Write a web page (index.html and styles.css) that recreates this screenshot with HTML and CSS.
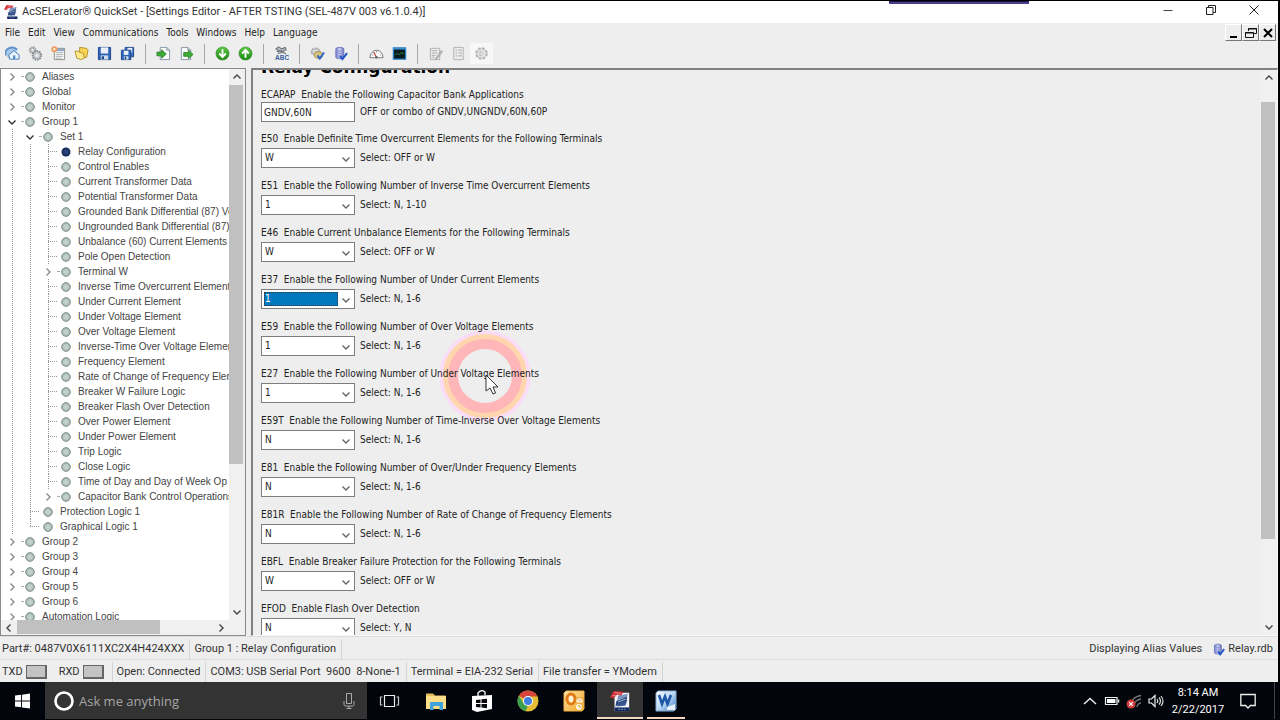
FILE: index.html
```html
<!DOCTYPE html>
<html lang="en">
<head>
<meta charset="utf-8">
<title>AcSELerator QuickSet</title>
<link rel="stylesheet" href="styles.css">
</head>
<body>
<svg class="defs" aria-hidden="true">
  <defs>
    <radialGradient id="g-dot"><stop offset="0" stop-color="#c9d8d3"/><stop offset="0.6" stop-color="#b8c8c3"/><stop offset="1" stop-color="#8d9f9a"/></radialGradient>
    <radialGradient id="g-navy"><stop offset="0" stop-color="#31508f"/><stop offset="1" stop-color="#12244f"/></radialGradient>
    <linearGradient id="g-green" x1="0" y1="0" x2="0" y2="1"><stop offset="0" stop-color="#5cc646"/><stop offset="1" stop-color="#1f8a17"/></linearGradient>
    <linearGradient id="g-db" x1="0" y1="0" x2="1" y2="0"><stop offset="0" stop-color="#6f7bd0"/><stop offset="0.5" stop-color="#c9cff2"/><stop offset="1" stop-color="#6a70b8"/></linearGradient>
    <linearGradient id="g-word" x1="0" y1="0" x2="1" y2="1"><stop offset="0" stop-color="#fff"/><stop offset="0.5" stop-color="#b9d8f5"/><stop offset="1" stop-color="#3a78c2"/></linearGradient>
    <linearGradient id="g-out" x1="0" y1="0" x2="1" y2="1"><stop offset="0" stop-color="#ffe9b0"/><stop offset="1" stop-color="#f2a21c"/></linearGradient>
    <symbol id="dot" viewBox="0 0 10 10"><circle cx="5" cy="5" r="4.400" fill="url(#g-dot)" stroke="#87958f" stroke-width="0.900"/></symbol>
    <symbol id="dot-on" viewBox="0 0 10 10"><circle cx="5" cy="5" r="4.500" fill="url(#g-navy)"/></symbol>
    <symbol id="chev-r" viewBox="0 0 8 8"><path d="M2.500 0.500 6 4 2.500 7.500" fill="none" stroke="currentColor" stroke-width="1.400"/></symbol>
    <symbol id="chev-l" viewBox="0 0 8 8"><path d="M5.500 0.500 2 4 5.500 7.500" fill="none" stroke="currentColor" stroke-width="1.400"/></symbol>
    <symbol id="chev-d" viewBox="0 0 8 8"><path d="M0.500 2.500 4 6 7.500 2.500" fill="none" stroke="currentColor" stroke-width="1.400"/></symbol>
    <symbol id="chev-u" viewBox="0 0 8 8"><path d="M0.500 5.500 4 2 7.500 5.500" fill="none" stroke="currentColor" stroke-width="1.400"/></symbol>
    <symbol id="quickset" viewBox="0 0 22 24">
      <path d="M5 3H21V23H5Z" fill="#f4f6fb"/>
      <path d="M5 19H21V23H5Z" fill="#12285f"/>
      <path d="M9 21h2m1 0h2m1 0h2" stroke="#8fa3d6" stroke-width="1"/>
      <path d="M9 6 20 4 18 8 8 11Z" fill="#7e93bd"/>
      <path d="M7 12 19 7 18 12 6 18Z" fill="#27477f"/>
      <path d="M9 15 19 11 17 17 8 18Z" fill="#3a5890"/>
      <path d="M9 13 17 10" stroke="#dfe6f3" stroke-width="0.800"/>
      <path d="M4 1 15 2 12 6 8 5 4 9 0 8Z" fill="#cf2d33"/>
      <path d="M5 3 12 3.500M3 6 8 6.500" stroke="#f2b2b2" stroke-width="0.800"/>
    </symbol>
    <symbol id="t-home" viewBox="0 0 16 16"><circle cx="7" cy="8" r="6" fill="#a9caea"/><path d="M1 10A7 6 0 0 1 13 4" fill="none" stroke="#5f93c9" stroke-width="2.200"/><path d="M4 9.500 9.500 5 15 9.500V14H5Z" fill="#eef5fc" stroke="#3f77b5" stroke-width="1"/><path d="M8.500 10h2.500v4H8.500Z" fill="#4f8ccc"/></symbol>
    <symbol id="t-gears" viewBox="0 0 16 16"><circle cx="5" cy="4.500" r="3.200" fill="#c3c6ca" stroke="#999ea3" stroke-width="2" stroke-dasharray="1.400 0.800"/><circle cx="9.500" cy="10" r="4.600" fill="#c7cacd" stroke="#83898f" stroke-width="2" stroke-dasharray="1.700 0.900"/><circle cx="9.500" cy="10" r="1.600" fill="#eee"/><circle cx="5" cy="4.500" r="1" fill="#eee"/></symbol>
    <symbol id="t-new" viewBox="0 0 16 16"><path d="M3.500 2.500H14.500V14.500H3.500Z" fill="#fbfbf5" stroke="#8d8d80"/><path d="M5 7h8M5 9h8M5 11h8M5 13h6" stroke="#a9b0bb"/><path d="M4 3h10v2.500H4Z" fill="#8ea8cc"/><circle cx="3.500" cy="3.500" r="3.200" fill="#f09a62"/><circle cx="3.500" cy="3.500" r="1.300" fill="#fff1c4"/></symbol>
    <symbol id="t-open" viewBox="0 0 16 16"><path d="M6 1.500 13.500 2.500 15 4 13.500 12 6 13Z" fill="#f7d455" stroke="#ab8420" stroke-width="0.900"/><path d="M1 5.500 5 5.500 6 7 10 7.500 11 13 8 14.500 3 13Z" fill="#fdeb8b" stroke="#ab8420" stroke-width="0.900"/></symbol>
    <symbol id="t-save" viewBox="0 0 16 16"><path d="M1.500 1.500H14.500V14.500H1.500Z" fill="#2e62b5" stroke="#1f4689"/><path d="M4 1.500h8v6.500H4Z" fill="#e8eff9"/><path d="M4 10h8v4.500H4Z" fill="#cfdcf0"/><path d="M5 11h2.500v3H5Z" fill="#1c3f7d"/></symbol>
    <symbol id="t-saveall" viewBox="0 0 16 16"><path d="M5.500 1.500H14.500V11.500H5.500Z" fill="#3b70c2" stroke="#1f4689"/><path d="M8 2h5v5H8Z" fill="#e8eff9"/><path d="M1.500 4.500H11.500V14.500H1.500Z" fill="#2e62b5" stroke="#1f4689"/><path d="M4 5h5v4.500H4Z" fill="#e8eff9"/><path d="M4 11h5v3.500H4Z" fill="#cfdcf0"/><path d="M5 11.500h1.500v3H5Z" fill="#1c3f7d"/></symbol>
    <symbol id="t-import" viewBox="0 0 16 16"><path d="M4.500 1.500H11.500L14.500 4.500V14.500H4.500Z" fill="#f8fafc" stroke="#8593a6"/><path d="M11.500 1.500V4.500H14.500" fill="none" stroke="#8593a6"/><path d="M1 6.500H6V4L11 8.500 6 13V10.500H1Z" fill="#3fae36" stroke="#23771d" stroke-width="0.800"/></symbol>
    <symbol id="t-export" viewBox="0 0 16 16"><path d="M2.500 1.500H9.500L12.500 4.500V14.500H2.500Z" fill="#f8fafc" stroke="#8593a6"/><path d="M9.500 1.500V4.500H12.500" fill="none" stroke="#8593a6"/><path d="M5 7H10V4.500L15 9 10 13.500V11H5Z" fill="#3fae36" stroke="#23771d" stroke-width="0.800"/></symbol>
    <symbol id="t-down" viewBox="0 0 16 16"><circle cx="8" cy="8" r="7" fill="url(#g-green)" stroke="#2a8522" stroke-width="0.600"/><path d="M8 3.500V11.500M4.500 8 8 11.800 11.500 8" fill="none" stroke="#fff" stroke-width="2"/></symbol>
    <symbol id="t-up" viewBox="0 0 16 16"><circle cx="8" cy="8" r="7" fill="url(#g-green)" stroke="#2a8522" stroke-width="0.600"/><path d="M8 12.500V4.500M4.500 8 8 4.200 11.500 8" fill="none" stroke="#fff" stroke-width="2"/></symbol>
    <symbol id="t-abc" viewBox="0 0 16 16"><path d="M2 3 5 1 8 3 12 1.500 13 4 9 6 4 4.500ZM3 6 8 5 13 9M4 8 9 7" fill="#b9bdc2" stroke="#6b7178" stroke-width="1.100"/><text x="1" y="15" class="abc">ABC</text></symbol>
    <symbol id="t-gearcheck" viewBox="0 0 16 16"><ellipse cx="6" cy="6" rx="4.500" ry="3.500" fill="#d4d6d8" stroke="#a2a5a8" stroke-width="1.800" stroke-dasharray="1.600 0.800"/><ellipse cx="9" cy="9.500" rx="4.500" ry="3.500" fill="#dcc67e" stroke="#aa9a62" stroke-width="1.200"/><path d="M8 10 10.500 13.500 15 7" fill="none" stroke="#2b62c9" stroke-width="2"/></symbol>
    <symbol id="t-db" viewBox="0 0 16 16"><path d="M3 3C3 1 11.500 1 11.500 3V12C11.500 14 3 14 3 12Z" fill="url(#g-db)" stroke="#5a62ae" stroke-width="0.800"/><path d="M3 5.500h8.500M3 8h8.500M3 10.500h8.500" stroke="#8890cc" stroke-width="0.800"/><path d="M7.500 10.500 10 14 15 7.500" fill="none" stroke="#1f55c4" stroke-width="2.200"/></symbol>
    <symbol id="t-gauge" viewBox="0 0 16 16"><path d="M1 12.500A7 8 0 0 1 15 12.500Z" fill="#fbfbfb" stroke="#70757b"/><path d="M8 12 5 6.500" stroke="#c3342c" stroke-width="1.200"/><path d="M3.500 9.500h1M8 5.500v1.200M12.500 9.500h-1" stroke="#777"/><circle cx="8" cy="12" r="1.300" fill="#666"/></symbol>
    <symbol id="t-term" viewBox="0 0 16 16"><path d="M1.500 2H14.500V14H1.500Z" fill="#061c1e" stroke="#2a7fc8" stroke-width="1.400"/><path d="M1 3h14" stroke="#3f97df" stroke-width="1.500"/><path d="M3 9 6 8 7.500 9.500 9.500 7 11 8 13 7.500" fill="none" stroke="#2f7d3c"/></symbol>
    <symbol id="t-edit" viewBox="0 0 16 16"><path d="M2.500 2.500H12.500V14.500H2.500Z" fill="#ececec" stroke="#b0b0b0"/><path d="M4 5h6M4 7.500h6M4 10h4M4 12h3" stroke="#aaa"/><path d="M14 5 9 12 8 14 10.500 12.500 15.500 6Z" fill="#c5c5c5" stroke="#9b9b9b" stroke-width="0.800"/></symbol>
    <symbol id="t-list" viewBox="0 0 16 16"><path d="M3 1.500H13V14.500H3Z" fill="#ececec" stroke="#b0b0b0"/><path d="M5 4.500h1.500M5 7.500h1.500M5 10.500h1.500M8 4.500h3.500M8 7.500h3.500M8 10.500h3.500" stroke="#a2a2a2"/></symbol>
    <symbol id="t-cog" viewBox="0 0 16 16"><circle cx="8" cy="8" r="5.500" fill="#e4e4e4" stroke="#b3b3b3" stroke-width="2.400" stroke-dasharray="2.700 1.620"/><circle cx="8" cy="8" r="4.800" fill="#e4e4e4" stroke="#b9b9b9" stroke-width="0.800"/><path d="M6.500 5.500 10 8 6.500 10.500Z" fill="#f8f8f8" stroke="#a9a9a9" stroke-width="0.800"/></symbol>
  </defs>
</svg>

<div class="desktop">
<div class="window">
  <header class="titlebar">
    <svg class="app-icon"><use href="#quickset"/></svg>
    <h1 class="title">AcSELerator® QuickSet - [Settings Editor - AFTER TSTING (SEL-487V 003 v6.1.0.4)]</h1>
    <div class="caption">
      <button class="cap-btn" aria-label="Minimize"><svg viewBox="0 0 10 10"><path d="M0.500 5.500h9" stroke="#444" fill="none"/></svg></button>
      <button class="cap-btn" aria-label="Restore"><svg viewBox="0 0 10 10"><path d="M0.500 2.500h6.500v7H0.500ZM2.500 2.500V0.500h7v7H7" stroke="#222" fill="none"/></svg></button>
      <button class="cap-btn" aria-label="Close"><svg viewBox="0 0 10 10"><path d="M0.500 0.500 9.500 9.500M9.500 0.500 0.500 9.500" stroke="#222" fill="none"/></svg></button>
    </div>
    <div class="recorder-tab"></div>
  </header>

  <div class="menubar">
    <nav class="menus">
      <button class="menu">File</button><button class="menu">Edit</button><button class="menu">View</button><button class="menu">Communications</button><button class="menu">Tools</button><button class="menu">Windows</button><button class="menu">Help</button><button class="menu">Language</button>
    </nav>
    <div class="mdi">
      <button class="mdi-btn" aria-label="Minimize document"><svg viewBox="0 0 12 12"><path d="M2 10h7" stroke="#000" stroke-width="2"/></svg></button>
      <button class="mdi-btn" aria-label="Restore document"><svg viewBox="0 0 12 12"><path d="M3.500 4V1.500h8v5H9M3 2h9" stroke="#111" fill="none"/><path d="M0.500 5.500h8v5h-8ZM0 6h9" stroke="#111" fill="none"/></svg></button>
      <button class="mdi-btn" aria-label="Close document"><svg viewBox="0 0 12 12"><path d="M2 2 10 10M10 2 2 10" stroke="#000" stroke-width="2"/></svg></button>
    </div>
  </div>

  <div class="toolbar" role="toolbar">
    <button class="tool" aria-label="Home"><svg><use href="#t-home"/></svg></button>
    <button class="tool" aria-label="Options"><svg><use href="#t-gears"/></svg></button>
    <button class="tool" aria-label="New"><svg><use href="#t-new"/></svg></button>
    <button class="tool" aria-label="Open"><svg><use href="#t-open"/></svg></button>
    <button class="tool" aria-label="Save"><svg><use href="#t-save"/></svg></button>
    <button class="tool" aria-label="Save all"><svg><use href="#t-saveall"/></svg></button>
    <span class="tool-sep"></span>
    <button class="tool" aria-label="Import"><svg><use href="#t-import"/></svg></button>
    <button class="tool" aria-label="Export"><svg><use href="#t-export"/></svg></button>
    <span class="tool-sep"></span>
    <button class="tool" aria-label="Read"><svg><use href="#t-down"/></svg></button>
    <button class="tool" aria-label="Send"><svg><use href="#t-up"/></svg></button>
    <span class="tool-sep"></span>
    <button class="tool" aria-label="Aliases"><svg><use href="#t-abc"/></svg></button>
    <span class="tool-sep"></span>
    <button class="tool" aria-label="Check settings"><svg><use href="#t-gearcheck"/></svg></button>
    <button class="tool" aria-label="Database"><svg><use href="#t-db"/></svg></button>
    <span class="tool-sep"></span>
    <button class="tool" aria-label="Meter"><svg><use href="#t-gauge"/></svg></button>
    <button class="tool" aria-label="Terminal"><svg><use href="#t-term"/></svg></button>
    <span class="tool-sep"></span>
    <button class="tool" aria-label="Edit" disabled><svg><use href="#t-edit"/></svg></button>
    <button class="tool" aria-label="List" disabled><svg><use href="#t-list"/></svg></button>
    <button class="tool tool-hot" aria-label="Run" disabled><svg><use href="#t-cog"/></svg></button>
  </div>

  <main class="work">
    <aside class="tree-pane">
      <div class="tree-body">
        <ul class="tree">
          <li><div class="node"><span class="twig"><svg><use href="#chev-r"/></svg></span><svg class="bullet"><use href="#dot"/></svg>Aliases</div></li>
          <li><div class="node"><span class="twig"><svg><use href="#chev-r"/></svg></span><svg class="bullet"><use href="#dot"/></svg>Global</div></li>
          <li><div class="node"><span class="twig"><svg><use href="#chev-r"/></svg></span><svg class="bullet"><use href="#dot"/></svg>Monitor</div></li>
          <li><div class="node"><span class="twig open"><svg><use href="#chev-d"/></svg></span><svg class="bullet"><use href="#dot"/></svg>Group 1</div>
            <ul class="branch">
              <li><div class="node"><span class="twig open"><svg><use href="#chev-d"/></svg></span><svg class="bullet"><use href="#dot"/></svg>Set 1</div>
                <ul class="branch">
                  <li><div class="node"><span class="twig leaf"></span><svg class="bullet"><use href="#dot-on"/></svg>Relay Configuration</div></li>
                  <li><div class="node"><span class="twig leaf"></span><svg class="bullet"><use href="#dot"/></svg>Control Enables</div></li>
                  <li><div class="node"><span class="twig leaf"></span><svg class="bullet"><use href="#dot"/></svg>Current Transformer Data</div></li>
                  <li><div class="node"><span class="twig leaf"></span><svg class="bullet"><use href="#dot"/></svg>Potential Transformer Data</div></li>
                  <li><div class="node"><span class="twig leaf"></span><svg class="bullet"><use href="#dot"/></svg>Grounded Bank Differential (87) Vo</div></li>
                  <li><div class="node"><span class="twig leaf"></span><svg class="bullet"><use href="#dot"/></svg>Ungrounded Bank Differential (87)</div></li>
                  <li><div class="node"><span class="twig leaf"></span><svg class="bullet"><use href="#dot"/></svg>Unbalance (60) Current Elements</div></li>
                  <li><div class="node"><span class="twig leaf"></span><svg class="bullet"><use href="#dot"/></svg>Pole Open Detection</div></li>
                  <li><div class="node"><span class="twig"><svg><use href="#chev-r"/></svg></span><svg class="bullet"><use href="#dot"/></svg>Terminal W</div></li>
                  <li><div class="node"><span class="twig leaf"></span><svg class="bullet"><use href="#dot"/></svg>Inverse Time Overcurrent Element</div></li>
                  <li><div class="node"><span class="twig leaf"></span><svg class="bullet"><use href="#dot"/></svg>Under Current Element</div></li>
                  <li><div class="node"><span class="twig leaf"></span><svg class="bullet"><use href="#dot"/></svg>Under Voltage Element</div></li>
                  <li><div class="node"><span class="twig leaf"></span><svg class="bullet"><use href="#dot"/></svg>Over Voltage Element</div></li>
                  <li><div class="node"><span class="twig leaf"></span><svg class="bullet"><use href="#dot"/></svg>Inverse-Time Over Voltage Element</div></li>
                  <li><div class="node"><span class="twig leaf"></span><svg class="bullet"><use href="#dot"/></svg>Frequency Element</div></li>
                  <li><div class="node"><span class="twig leaf"></span><svg class="bullet"><use href="#dot"/></svg>Rate of Change of Frequency Element</div></li>
                  <li><div class="node"><span class="twig leaf"></span><svg class="bullet"><use href="#dot"/></svg>Breaker W Failure Logic</div></li>
                  <li><div class="node"><span class="twig leaf"></span><svg class="bullet"><use href="#dot"/></svg>Breaker Flash Over Detection</div></li>
                  <li><div class="node"><span class="twig leaf"></span><svg class="bullet"><use href="#dot"/></svg>Over Power Element</div></li>
                  <li><div class="node"><span class="twig leaf"></span><svg class="bullet"><use href="#dot"/></svg>Under Power Element</div></li>
                  <li><div class="node"><span class="twig leaf"></span><svg class="bullet"><use href="#dot"/></svg>Trip Logic</div></li>
                  <li><div class="node"><span class="twig leaf"></span><svg class="bullet"><use href="#dot"/></svg>Close Logic</div></li>
                  <li><div class="node"><span class="twig leaf"></span><svg class="bullet"><use href="#dot"/></svg>Time of Day and Day of Week Op</div></li>
                  <li><div class="node"><span class="twig"><svg><use href="#chev-r"/></svg></span><svg class="bullet"><use href="#dot"/></svg>Capacitor Bank Control Operations</div></li>
                </ul>
              </li>
              <li><div class="node"><span class="twig leaf"></span><svg class="bullet"><use href="#dot"/></svg>Protection Logic 1</div></li>
              <li><div class="node"><span class="twig leaf last"></span><svg class="bullet"><use href="#dot"/></svg>Graphical Logic 1</div></li>
            </ul>
          </li>
          <li><div class="node"><span class="twig"><svg><use href="#chev-r"/></svg></span><svg class="bullet"><use href="#dot"/></svg>Group 2</div></li>
          <li><div class="node"><span class="twig"><svg><use href="#chev-r"/></svg></span><svg class="bullet"><use href="#dot"/></svg>Group 3</div></li>
          <li><div class="node"><span class="twig"><svg><use href="#chev-r"/></svg></span><svg class="bullet"><use href="#dot"/></svg>Group 4</div></li>
          <li><div class="node"><span class="twig"><svg><use href="#chev-r"/></svg></span><svg class="bullet"><use href="#dot"/></svg>Group 5</div></li>
          <li><div class="node"><span class="twig"><svg><use href="#chev-r"/></svg></span><svg class="bullet"><use href="#dot"/></svg>Group 6</div></li>
          <li><div class="node"><span class="twig"><svg><use href="#chev-r"/></svg></span><svg class="bullet"><use href="#dot"/></svg>Automation Logic</div></li>
        </ul>
        <div class="vscroll"><svg><use href="#chev-u"/></svg><div class="track"><div class="thumb tree-thumb"></div></div><svg><use href="#chev-d"/></svg></div>
      </div>
      <div class="hscroll"><svg><use href="#chev-l"/></svg><div class="track"><div class="thumb"></div></div><svg><use href="#chev-r"/></svg></div>
    </aside>

    <section class="editor">
      <form class="form">
        <h2 class="heading">Relay Configuration</h2>
        <div class="field first"><label for="ecapap">ECAPAP&nbsp; Enable the Following Capacitor Bank Applications</label><div class="entry"><input class="text" id="ecapap" type="text" value="GNDV,60N"><span>OFF or combo of GNDV,UNGNDV,60N,60P</span></div></div>
        <div class="field"><label for="e50">E50&nbsp; Enable Definite Time Overcurrent Elements for the Following Terminals</label><div class="entry"><div class="combo"><select id="e50"><option>W</option><option>OFF</option></select><svg><use href="#chev-d"/></svg></div><span>Select: OFF or W</span></div></div>
        <div class="field"><label for="e51">E51&nbsp; Enable the Following Number of Inverse Time Overcurrent Elements</label><div class="entry"><div class="combo"><select id="e51"><option>1</option><option>N</option></select><svg><use href="#chev-d"/></svg></div><span>Select: N, 1-10</span></div></div>
        <div class="field"><label for="e46">E46&nbsp; Enable Current Unbalance Elements for the Following Terminals</label><div class="entry"><div class="combo"><select id="e46"><option>W</option><option>OFF</option></select><svg><use href="#chev-d"/></svg></div><span>Select: OFF or W</span></div></div>
        <div class="field"><label for="e37">E37&nbsp; Enable the Following Number of Under Current Elements</label><div class="entry"><div class="combo active"><select id="e37"><option>1</option><option>N</option></select><svg><use href="#chev-d"/></svg></div><span>Select: N, 1-6</span></div></div>
        <div class="field"><label for="e59">E59&nbsp; Enable the Following Number of Over Voltage Elements</label><div class="entry"><div class="combo"><select id="e59"><option>1</option><option>N</option></select><svg><use href="#chev-d"/></svg></div><span>Select: N, 1-6</span></div></div>
        <div class="field"><label for="e27">E27&nbsp; Enable the Following Number of Under Voltage Elements</label><div class="entry"><div class="combo"><select id="e27"><option>1</option><option>N</option></select><svg><use href="#chev-d"/></svg></div><span>Select: N, 1-6</span></div></div>
        <div class="field"><label for="e59t">E59T&nbsp; Enable the Following Number of Time-Inverse Over Voltage Elements</label><div class="entry"><div class="combo"><select id="e59t"><option>N</option><option>1</option></select><svg><use href="#chev-d"/></svg></div><span>Select: N, 1-6</span></div></div>
        <div class="field"><label for="e81">E81&nbsp; Enable the Following Number of Over/Under Frequency Elements</label><div class="entry"><div class="combo"><select id="e81"><option>N</option><option>1</option></select><svg><use href="#chev-d"/></svg></div><span>Select: N, 1-6</span></div></div>
        <div class="field"><label for="e81r">E81R&nbsp; Enable the Following Number of Rate of Change of Frequency Elements</label><div class="entry"><div class="combo"><select id="e81r"><option>N</option><option>1</option></select><svg><use href="#chev-d"/></svg></div><span>Select: N, 1-6</span></div></div>
        <div class="field"><label for="ebfl">EBFL&nbsp; Enable Breaker Failure Protection for the Following Terminals</label><div class="entry"><div class="combo"><select id="ebfl"><option>W</option><option>OFF</option></select><svg><use href="#chev-d"/></svg></div><span>Select: OFF or W</span></div></div>
        <div class="field"><label for="efod">EFOD&nbsp; Enable Flash Over Detection</label><div class="entry"><div class="combo"><select id="efod"><option>N</option><option>Y</option></select><svg><use href="#chev-d"/></svg></div><span>Select: Y, N</span></div></div>
      </form>
      <div class="vscroll"><svg><use href="#chev-u"/></svg><div class="track"><div class="thumb form-thumb"></div></div><svg><use href="#chev-d"/></svg></div>
    </section>
  </main>

  <footer class="status">
    <span class="cell">Part#: 0487V0X6111XC2X4H424XXX</span>
    <span class="cell">Group 1 : Relay Configuration</span>
    <span class="right">Displaying Alias Values</span>
    <span class="rdb"><svg><use href="#t-db"/></svg>Relay.rdb</span>
  </footer>
  <footer class="status comm">
    <span class="cell leds">TXD <i class="led"></i><span class="rxd">RXD</span> <i class="led"></i></span>
    <span class="cell">Open: Connected</span>
    <span class="cell">COM3: USB Serial Port&nbsp; 9600&nbsp; 8-None-1</span>
    <span class="cell">Terminal = EIA-232 Serial</span>
    <span class="cell">File transfer = YModem</span>
  </footer>
  <svg class="click" viewBox="0 0 96 96">
    <circle cx="48" cy="48" r="43" fill="none" stroke="#fbdcf6" stroke-width="5"/>
    <circle cx="48" cy="48" r="39" fill="none" stroke="#ffd6ae" stroke-width="6"/>
    <circle cx="48" cy="48" r="32" fill="none" stroke="#ffb6b8" stroke-width="10"/>
  </svg>
  <svg class="click pointer" viewBox="0 0 96 96">
    <path d="M49 47V63L53 60 56 66 58.500 65 56 59H61Z" fill="#fff" stroke="#333" stroke-width="1"/>
  </svg>
</div>
</div>

<div class="taskbar">
  <button class="start" aria-label="Start"><svg viewBox="0 0 16 16"><path d="M0 2.200 6.500 1.300V7.500H0ZM7.500 1.200 16 0V7.500H7.500ZM0 8.500H6.500V14.700L0 13.800ZM7.500 8.500H16V16L7.500 14.800Z" fill="#fff"/></svg></button>
  <div class="search">
    <svg class="cortana" viewBox="0 0 20 20"><circle cx="10" cy="10" r="8.500" fill="none" stroke="#fff" stroke-width="2.600"/></svg>
    <input class="ask" type="text" placeholder="Ask me anything" aria-label="Ask me anything">
    <svg class="mic" viewBox="0 0 12 16"><path d="M3.500 0.500h5v10h-5Z" fill="none" stroke="#aaa"/><path d="M1 8v3.500q0 1.500 1.500 1.500h7q1.500 0 1.500-1.500V8M6 13v2.500M3.500 15.500h5" fill="none" stroke="#aaa"/></svg>
  </div>
  <button class="task" aria-label="Task view"><svg viewBox="0 0 22 22"><path d="M5.500 5.500h10v11h-10Z" fill="none" stroke="#eee" stroke-width="1.200"/><path d="M3.500 7H1.500V15H3.500M17.500 7h2V15h-2" fill="none" stroke="#ccc" stroke-width="1.200"/></svg></button>
  <button class="task" aria-label="File Explorer"><svg viewBox="0 0 22 22"><path d="M1 3.500h7l2 2h10.500V19H1Z" fill="#e7bd5a"/><path d="M1 6h20V19H1Z" fill="#fbdd8a"/><path d="M5 20V12h13v8h-3.500v-4h-6v4Z" fill="#3fa3dd"/></svg></button>
  <button class="task" aria-label="Store"><svg viewBox="0 0 22 22"><path d="M1 6 21 5V19L6 22 1 20Z" fill="#fff"/><path d="M7 6V3Q10-1 14 2V5" fill="none" stroke="#fff" stroke-width="1.300"/><path d="M5 10 9.500 9.500V13H5ZM10.500 9.300 16 8.800V13h-5.500ZM5 14h4.500v3.500L5 17ZM10.500 14H16v4.300l-5.500-.7Z" fill="#05080d"/></svg></button>
  <button class="task" aria-label="Chrome"><svg viewBox="0 0 22 22"><circle cx="11" cy="11" r="10.500" fill="#e5bd35"/><path d="M11 11 1.900 5.750A10.500 10.500 0 0 1 20.600 6.500L11 6.500Z" fill="#d6453a"/><path d="M1.900 5.750 7 14 11 15.500 8.500 21.200A10.500 10.500 0 0 1 1.900 5.750Z" fill="#3b9f52"/><circle cx="11" cy="11" r="5" fill="#fff"/><circle cx="11" cy="11" r="4" fill="#3f7de0"/></svg></button>
  <button class="task" aria-label="Outlook"><svg viewBox="0 0 22 22"><path d="M3 1H21V19L19 21H1V3Z" fill="url(#g-out)" stroke="#f2b04a"/><ellipse cx="8" cy="9" rx="4" ry="5" fill="#fff3d0" stroke="#e07a13" stroke-width="3"/><path d="M13 8h7v5h-7Z" fill="#fdf6e3" stroke="#e09a2f" stroke-width="0.800"/><path d="M13 8 16.500 11 20 8" fill="none" stroke="#e09a2f" stroke-width="0.800"/><circle cx="16" cy="17" r="3" fill="#fff5d8"/><path d="M16 15v2h2" fill="none" stroke="#d08a1f" stroke-width="0.800"/></svg></button>
  <button class="task current" aria-label="QuickSet"><svg viewBox="0 0 22 24"><use href="#quickset"/></svg></button>
  <button class="task running" aria-label="Word"><svg viewBox="0 0 22 22"><path d="M3 1H21V19L19 21H1V3Z" fill="url(#g-word)" stroke="#88aed6"/><path d="M4 5 7 14 10 6.500 12.500 14 16 5" fill="none" stroke="#1f57a8" stroke-width="2.600"/><path d="M12 17 20 14V20H12Z" fill="#e8f1fa"/></svg></button>
  <div class="tray">
    <svg viewBox="0 0 16 16"><path d="M2 11 8 5.500 14 11" fill="none" stroke="#e5e5e5" stroke-width="1.600"/></svg>
    <svg viewBox="0 0 16 16"><path d="M1.500 4.500H13V11.500H1.500Z" fill="none" stroke="#eee" stroke-width="1.200"/><path d="M3 6h8.500v4H3Z" fill="#fff"/><path d="M14.500 6.500v3" stroke="#eee" stroke-width="1.500"/></svg>
    <svg viewBox="0 0 16 16"><path d="M4 14A12 12 0 0 1 15 2.500M7.500 14A8 8 0 0 1 15 6M11 14A5 5 0 0 1 15 9.800" fill="none" stroke="#777" stroke-width="1.300"/><circle cx="5" cy="11" r="4.500" fill="#d33a3a"/><path d="M3.200 9.200 6.800 12.800M6.800 9.200 3.200 12.800" stroke="#fff" stroke-width="1.200"/></svg>
    <svg viewBox="0 0 16 16"><path d="M1 6h2.500L7 2.500v11L3.500 10H1Z" fill="none" stroke="#eee" stroke-width="1.200"/><path d="M9 6q1.500 2 0 4M11 4.500q3 3.500 0 7M13 3q4 5 0 10" fill="none" stroke="#ddd" stroke-width="1.200"/></svg>
    <div class="clock"><span>8:14 AM</span><span>2/22/2017</span></div>
    <svg class="note" viewBox="0 0 16 16"><path d="M0.800 1.500H15.200V12.500H10.500L8 15 5.500 12.500H0.800Z" fill="none" stroke="#eee" stroke-width="1.300"/></svg>
    <span class="peek"></span>
  </div>
</div>
</body>
</html>
```
FILE: styles.css
```css
* { box-sizing: border-box; }

body {
  margin: 0;
  height: 100vh;
  display: flex;
  flex-direction: column;
  overflow: hidden;
  background: #000;
  color: #222;
  font: 11px/16px Roboto, "Noto Sans", sans-serif;
}

button, input, select {
  margin: 0;
  padding: 0;
  border: 0;
  background: none;
  color: inherit;
  font: inherit;
}

.defs { position: absolute; width: 0; height: 0; }
.abc { font: bold 7px "Liberation Sans", sans-serif; fill: #33619f; }

.desktop {
  flex: 1;
  min-height: 0;
  display: flex;
  padding: 1px 2px 0 0;
}

.window {
  position: relative;
  flex: 1;
  min-width: 0;
  display: flex;
  flex-direction: column;
  background: #eee;
}

/* Title bar */
.titlebar {
  position: relative;
  display: flex;
  align-items: center;
  height: 22px;
  padding: 0 3px 0 4px;
  background: #fff;
}
.app-icon { width: 14px; height: 16px; margin-right: 4px; }
.title { flex: 1; margin: 0; font-size: 11px; font-weight: 400; color: #333; }
.caption { display: flex; }
.cap-btn { width: 43px; height: 20px; }
.cap-btn svg { width: 10px; height: 10px; }
.recorder-tab {
  position: absolute;
  top: 0;
  right: 249px;
  width: 140px;
  height: 3px;
  background: #4b3f8c;
  border-top: 1px solid #1a1448;
}

/* Menus */
.menubar { display: flex; justify-content: space-between; height: 20px; }
.menus {
  display: flex;
  gap: 8px;
  padding-left: 5px;
  font: 10px/20px "DejaVu Sans Condensed", "Noto Sans", sans-serif;
}
.mdi { display: flex; padding: 1px 2px 0 0; }
.mdi-btn {
  width: 17px;
  height: 17px;
  line-height: 0;
  border: solid;
  border-width: 1px;
  border-color: #fff #777 #777 #fff;
}
.mdi-btn svg { width: 12px; height: 12px; }

/* Toolbar */
.toolbar { display: flex; align-items: center; height: 25px; padding: 0 0 4px 1px; }
.tool { width: 23px; height: 21px; line-height: 0; }
.tool svg { width: 15px; height: 15px; }
.tool-hot { background: #f7f7f7; }
.tool-sep { width: 1px; height: 20px; margin: 0 6px; background: #a8a8a8; }

/* Work area */
.work { flex: 1; min-height: 0; display: flex; gap: 5px; }

.tree-pane {
  width: 246px;
  display: flex;
  flex-direction: column;
  padding-right: 1px;
  background: #eee;
  border: 1px solid #8b8b8b;
}
.tree-body { flex: 1; min-height: 0; display: flex; background: #fff; }
.tree, .branch { margin: 0; padding: 0; list-style: none; }
.tree { flex: 1; overflow: hidden; padding-left: 2px; font: 10px/15px "Liberation Sans", Arial, sans-serif; color: #444; }
.branch {
  padding-left: 18px;
  background: repeating-linear-gradient(#999 0 1px, transparent 1px 2px) 9px 0 / 1px 100% no-repeat;
}
.node { display: flex; align-items: center; height: 15px; white-space: nowrap; }
.twig {
  flex: none;
  display: flex;
  align-items: center;
  width: 22px;
  height: 15px;
  padding-left: 5px;
  color: #8a8a8a;
  background: linear-gradient(90deg, #aaa, #aaa) 18px 7px / 3px 1px no-repeat;
}
.twig.open { color: #333; }
.twig svg { width: 8px; height: 8px; }
.twig.leaf {
  background:
    repeating-linear-gradient(#999 0 1px, transparent 1px 2px) 9px 0 / 1px 100% no-repeat,
    repeating-linear-gradient(90deg, #999 0 1px, transparent 1px 2px) 9px 7px / 10px 1px no-repeat;
}
.twig.last { background-size: 1px 8px, 10px 1px; }
.bullet { flex: none; width: 10px; height: 10px; margin-right: 7px; }

/* Scroll bars */
.vscroll, .hscroll { display: flex; align-items: center; background: #f0f0f0; color: #444; }
.vscroll { flex: none; flex-direction: column; width: 15px; }
.hscroll { height: 15px; padding-right: 15px; }
.vscroll svg, .hscroll svg { flex: none; width: 8px; height: 8px; margin: 4px; }
.track { flex: 1; min-height: 0; align-self: stretch; }
.thumb { background: #c0c0c0; }
.vscroll .thumb { width: 14px; }
.hscroll .thumb { width: 73%; height: 14px; }
.tree-thumb { height: 73%; }
.form-thumb { height: 82%; margin-top: 16px; }

/* Settings form */
.editor {
  flex: 1;
  min-width: 0;
  display: flex;
  padding-right: 1px;
  border: 2px solid #808080;
  border-width: 2px 1px 1px 2px;
  border-right-color: #f8f8f8;
  border-bottom-color: #f8f8f8;
}
.form {
  flex: 1;
  overflow: hidden;
  padding-left: 8px;
  font: 10px/19px "DejaVu Sans Condensed", "Noto Sans", sans-serif;
}
.heading { margin: -14px 0 10px; font: bold 17px/22px "DejaVu Sans", sans-serif; color: #000; }
.field { height: 47px; }
.field label { display: block; margin-bottom: 2px; line-height: 14px; }
.field.first { height: 44px; }
.field.first label { margin-bottom: 0; }
.entry { display: flex; gap: 5px; }
.field label, .entry { position: relative; z-index: 1; }
.text, .combo { width: 94px; height: 20px; background: #fff; border: 1px solid #7d7d7d; }
.text { padding: 0 2px; }
.combo { display: flex; padding: 1px; }
.combo select { flex: 1; min-width: 0; margin: 1px; padding-left: 1px; appearance: none; line-height: 14px; }
.combo svg { width: 8px; height: 8px; margin: 5px 3px; color: #666; }
.combo.active select { background: #0078c0; color: #fff; outline: 1px dotted #333; outline-offset: -1px; }

.click { position: absolute; left: 437px; top: 327px; width: 96px; height: 96px; pointer-events: none; }
.pointer { z-index: 2; }

/* Status bars */
.status { display: flex; align-items: center; height: 23px; padding: 2px 5px 0 2px; border-top: 1px solid #ddd; color: #333; }
.cell { height: 20px; margin-right: 4px; padding-right: 5px; line-height: 20px; border-right: 1px solid #d4d4d4; }
.right { margin-left: auto; }
.rdb { display: flex; align-items: center; margin-left: 10px; }
.rdb svg { width: 13px; height: 13px; margin-right: 3px; }
.leds { display: flex; align-items: center; gap: 3px; padding-right: 8px; }
.rxd { margin-left: 9px; }
.led { width: 21px; height: 14px; background: #c4c4c4; border: 1px solid #666; border-width: 1px 2px 2px 1px; }

/* Taskbar */
.taskbar { display: flex; height: 38px; padding-bottom: 1px; background: #02050b; color: #fff; }
.start { width: 45px; }
.start svg { width: 15px; height: 16px; vertical-align: middle; }
.search { display: flex; align-items: center; width: 322px; padding: 0 12px 0 9px; background: #333; }
.cortana { width: 20px; height: 20px; margin-right: 5px; }
.ask { flex: 1; min-width: 0; font: 13px "Open Sans", "Noto Sans", sans-serif; }
.ask::placeholder { color: #a6a6a6; opacity: 1; }
.mic { width: 12px; height: 16px; }
.task { width: 46px; line-height: 0; border: solid transparent; border-width: 2px 0; }
.task svg { width: 22px; height: 22px; }
.current { background: #333; border-top-color: #333; border-bottom-color: #f3d6bd; }
.running { width: 38px; margin: 0 4px; border-bottom-color: #f3d6bd; }
.tray { display: flex; align-items: center; margin-left: auto; gap: 6px; }
.tray svg { width: 16px; height: 16px; }
.clock { display: flex; flex-direction: column; width: 56px; font: 11px/17px Roboto, "Noto Sans", sans-serif; text-align: center; }
.tray .note { margin: 0 12px 0 8px; }
.peek { align-self: stretch; width: 1px; margin-right: 5px; background: #444; }
```
